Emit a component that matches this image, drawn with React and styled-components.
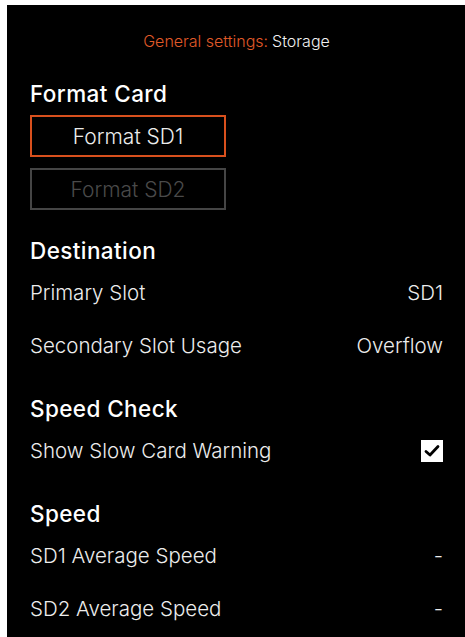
import React from 'react';
import styled, { createGlobalStyle } from 'styled-components';

const GlobalStyle = createGlobalStyle`
  html, body {
    margin: 0;
    padding: 0;
    background: #ffffff;
    overflow: hidden;
  }
  body {
    font-family: Inter, "Liberation Sans", Arial, sans-serif;
  }
`;

const Page = styled.div`
  padding: 5px 0 0 7px;
`;

const Screen = styled.div`
  background: #000;
  width: 458px;
  height: 632px;
  box-sizing: border-box;
  padding: 0 22px 0 23px;
  display: flex;
  flex-direction: column;
  overflow: hidden;
`;

const Header = styled.div`
  height: 72px;
  display: flex;
  align-items: center;
  justify-content: center;
  font-size: 16px;
  font-weight: 300;
  color: #f2f2f2;
`;

const Crumb = styled.span`
  color: #e05a28;
  margin-right: 4px;
`;

const Section = styled.section`
  display: flex;
  flex-direction: column;
  & + & {
    margin-top: 20px;
  }
`;

const Heading = styled.h2`
  margin: 0;
  height: 32px;
  display: flex;
  align-items: center;
  font-size: 22.5px;
  font-weight: 500;
  letter-spacing: 0.4px;
  color: #fff;
`;

const Buttons = styled.div`
  display: flex;
  flex-direction: column;
  align-items: flex-start;
  gap: 11px;
  padding: 6px 0 4px;
`;

const FormatButton = styled.button`
  width: 196px;
  height: 42px;
  box-sizing: border-box;
  background: transparent;
  border: 2px solid ${p => (p.$active ? '#d9501d' : '#454545')};
  color: ${p => (p.$active ? '#ececec' : '#4a4a4a')};
  font-family: Inter, "Liberation Sans", Arial, sans-serif;
  font-size: 21px;
  font-weight: 300;
  padding: 0;
  cursor: pointer;
`;

const Row = styled.div`
  height: 53px;
  display: flex;
  align-items: center;
  justify-content: space-between;
  font-size: 20.5px;
  font-weight: 300;
  color: #ededed;
`;

const Value = styled.span`
  color: #ededed;
`;

const Check = styled.span`
  width: 22px;
  height: 22px;
  background: #fff;
  display: flex;
  align-items: center;
  justify-content: center;
`;

const Checkbox = () => (
  <Check>
    <svg width="16" height="14" viewBox="0 0 16 14">
      <polyline points="2,7.5 6,11 14,2.5" fill="none" stroke="#000" strokeWidth="2.8" strokeLinecap="round" strokeLinejoin="round" />
    </svg>
  </Check>
);

export default function App() {
  return (
    <Page>
      <GlobalStyle />
      <Screen>
        <Header>
          <Crumb>General settings:</Crumb>Storage
        </Header>

        <Section>
          <Heading>Format Card</Heading>
          <Buttons>
            <FormatButton $active>Format SD1</FormatButton>
            <FormatButton>Format SD2</FormatButton>
          </Buttons>
        </Section>

        <Section>
          <Heading>Destination</Heading>
          <Row>Primary Slot<Value>SD1</Value></Row>
          <Row>Secondary Slot Usage<Value>Overflow</Value></Row>
        </Section>

        <Section>
          <Heading>Speed Check</Heading>
          <Row>Show Slow Card Warning<Checkbox /></Row>
        </Section>

        <Section>
          <Heading>Speed</Heading>
          <Row>SD1 Average Speed<Value>-</Value></Row>
          <Row>SD2 Average Speed<Value>-</Value></Row>
        </Section>
      </Screen>
    </Page>
  );
}
